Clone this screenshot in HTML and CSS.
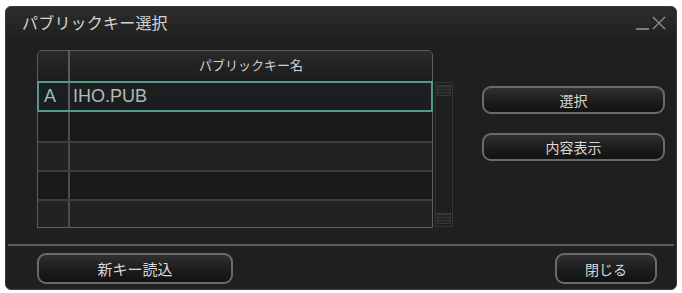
FILE: index.html
```html
<!DOCTYPE html>
<html lang="ja">
<head>
<meta charset="utf-8">
<link rel="stylesheet" href="styles.css">
</head>
<body>
<div class="window">
  <div class="titlebar">
    <span class="title">パブリックキー選択</span>
    <span class="winctl">
      <svg width="34" height="18" viewBox="0 0 34 18">
        <line x1="2" y1="15" x2="15" y2="15" stroke="#9a9a9a" stroke-width="1.5"/>
        <line x1="19" y1="3" x2="31" y2="15" stroke="#8a8a8a" stroke-width="1.5"/>
        <line x1="31" y1="3" x2="19" y2="15" stroke="#8a8a8a" stroke-width="1.5"/>
      </svg>
    </span>
  </div>
  <div class="main">
    <div class="tablewrap">
      <div class="table">
        <div class="hdr">
          <div class="hcell mark"></div>
          <div class="hcell name">パブリックキー名</div>
        </div>
        <div class="row sel"><div class="cell mark">A</div><div class="cell name">IHO.PUB</div></div>
        <div class="row dark"><div class="cell mark"></div><div class="cell name"></div></div>
        <div class="row"><div class="cell mark"></div><div class="cell name"></div></div>
        <div class="row dark"><div class="cell mark"></div><div class="cell name"></div></div>
        <div class="row last"><div class="cell mark"></div><div class="cell name"></div></div>
      </div>
      <div class="scroll">
        <div class="grip"></div>
        <div class="grip"></div>
      </div>
    </div>
    <div class="side">
      <button class="btn wide">選択</button>
      <button class="btn wide">内容表示</button>
    </div>
  </div>
  <div class="sep"></div>
  <div class="footer">
    <button class="btn load">新キー読込</button>
    <button class="btn close">閉じる</button>
  </div>
</div>
</body>
</html>
```
FILE: styles.css
```css
* { box-sizing: border-box; }
html, body { margin: 0; padding: 0; background: #ffffff; }
body {
  width: 682px; height: 293px; overflow: hidden;
  font-family: "Noto Sans CJK JP", "Noto Sans", sans-serif;
  color: #d2d2d2;
}
.window {
  margin: 6px 0 0 5px;
  width: 672px; height: 284px;
  background: #1f1f1f;
  border-radius: 6px;
  border: 1px solid #3a3a3a;
  display: flex; flex-direction: column;
}
.titlebar {
  height: 30px;
  display: flex; align-items: center; justify-content: space-between;
  padding: 0 8px 0 16px;
  background: linear-gradient(#2c2c2c, #212121);
  border-radius: 6px 6px 0 0;
}
.title { font-size: 16px; color: #d4d4d4; letter-spacing: 0.2px; }
.winctl { display: flex; margin-top: 2px; }
.main {
  display: flex;
  padding: 13px 0 0 31px;
  height: 191px;
}
.tablewrap { display: flex; }
.table {
  width: 396px;
  border: 1px solid #5e5e5e;
  border-radius: 5px 5px 0 0;
  display: flex; flex-direction: column;
  background: #1c1c1c;
}
.hdr {
  display: flex; height: 30px;
  background: linear-gradient(#2a2a2a, #1b1b1b);
  border-radius: 5px 5px 0 0;
}
.hcell.mark { width: 32px; border-right: 2px solid #5a5a5a; }
.hcell.name {
  flex: 1; text-align: center; font-size: 13px; line-height: 28px; color: #d0d0d0;
}
.row {
  display: flex; height: 29px;
  border-top: 2px solid #3c3c3c;
  background: #222222;
}
.row.dark { background: #1a1a1a; }
.row.last { height: 28px; }
.cell.mark { width: 32px; border-right: 2px solid #4c4c4c; }
.cell.name { flex: 1; }
.row.sel {
  border: 2px solid #4f9a8c;
  margin: 0 -1px;
  height: 31px;
  background: linear-gradient(#1d2020, #1a1c1d);
}
.row.sel + .row { border-top: none; }
.row.sel .cell.mark {
  width: 31px; font-size: 18px; line-height: 26px; padding-left: 5px;
  color: #8fc3b8; font-family: "Liberation Sans", sans-serif;
  border-right-color: #55605d;
}
.row.sel .cell.name {
  font-size: 18px; line-height: 26px; padding-left: 3px;
  color: #b4b8b7; font-family: "Liberation Sans", sans-serif;
}
.scroll {
  width: 18px; margin: 32px 0 0 2px;
  height: 145px;
  border: 1px solid #333333;
  display: flex; flex-direction: column; justify-content: space-between;
  padding: 2px 1px;
}
.grip {
  height: 11px;
  background: repeating-linear-gradient(#363636 0 1px, #242424 1px 3px);
  border: 1px solid #383838;
}
.side {
  display: flex; flex-direction: column; gap: 19px;
  margin-left: 29px; padding-top: 36px;
}
.btn {
  font-family: "Noto Sans CJK JP", "Noto Sans", sans-serif;
  color: #d8d8d8;
  font-size: 14px;
  background: linear-gradient(#303030, #1c1c1c 55%, #121212);
  border: 2px solid #6a6a6a;
  border-radius: 9px;
  height: 28px;
  padding: 0;
}
.btn.wide { width: 183px; }
.sep {
  margin: 16px 0 0 2px;
  width: 666px;
  height: 2px;
  background: #5c5c5c;
}
.footer {
  display: flex; justify-content: space-between;
  padding: 7px 19px 0 31px;
}
.btn.load { width: 196px; height: 31px; font-size: 15px; }
.btn.close { width: 102px; height: 31px; }
```
